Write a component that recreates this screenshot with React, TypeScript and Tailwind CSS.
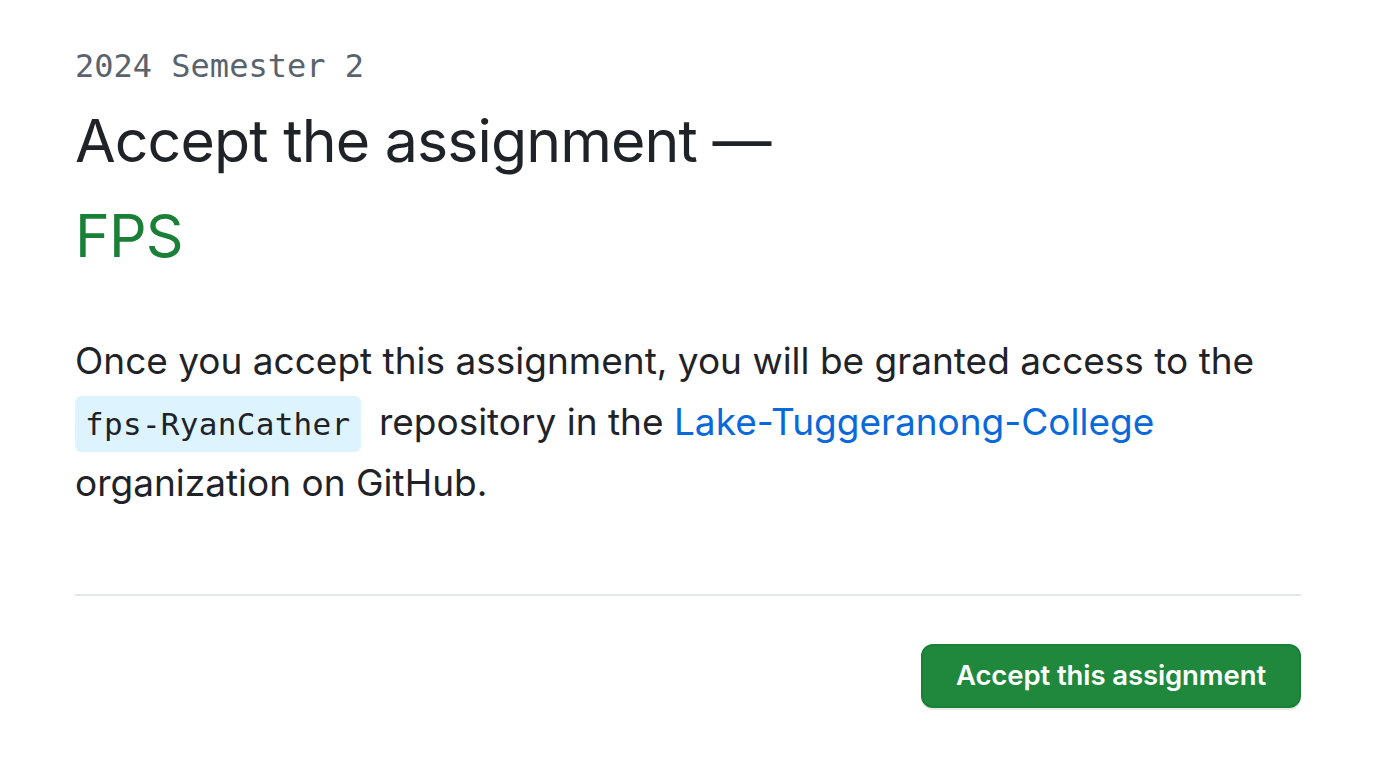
import React from "react";

export default function App() {
  return (
    <div className="min-h-screen w-full bg-white px-[75px] pt-[42px] font-['Inter','Liberation_Sans',Arial,sans-serif] text-[#1f2328]">
      <div className="w-[1226px]">
        {/* Classroom label */}
        <p className="font-['DejaVu_Sans_Mono','Liberation_Mono',monospace] text-[32px] leading-[48px] text-[#59636e]">
          2024 Semester 2
        </p>

        {/* Title */}
        <h1 className="mt-[3px] text-[59px] font-normal leading-[95px] tracking-[-0.9px]">
          Accept the assignment —
          <br />
          <span className="text-[#1a7f37]">FPS</span>
        </h1>

        {/* Description */}
        <p className="mt-[47px] text-[37px] leading-[61px]">
          Once you accept this assignment, you will be granted access to the{" "}
          <code className="mr-[8px] whitespace-nowrap rounded-[6px] bg-[#ddf4ff] px-[10px] py-[10px] align-baseline font-['DejaVu_Sans_Mono','Liberation_Mono',monospace] text-[31px] leading-none tracking-[0.3px]">
            fps-RyanCather
          </code>{" "}
          repository in the{" "}
          <a href="#" className="text-[#0969da]">
            Lake-Tuggeranong-College
          </a>{" "}
          organization on GitHub.
        </p>

        {/* Footer */}
        <div className="mt-[81px] border-t-2 border-[#e3e6ea] pt-[48px]">
          <div className="flex justify-end">
            <button className="h-[64px] rounded-[12px] border-2 border-[#1a7f37] bg-[#1f883d] px-[33px] text-[27.5px] font-semibold tracking-[-0.1px] text-white shadow-[0_2px_0_rgba(31,35,40,0.1)]">
              Accept this assignment
            </button>
          </div>
        </div>
      </div>
    </div>
  );
}
